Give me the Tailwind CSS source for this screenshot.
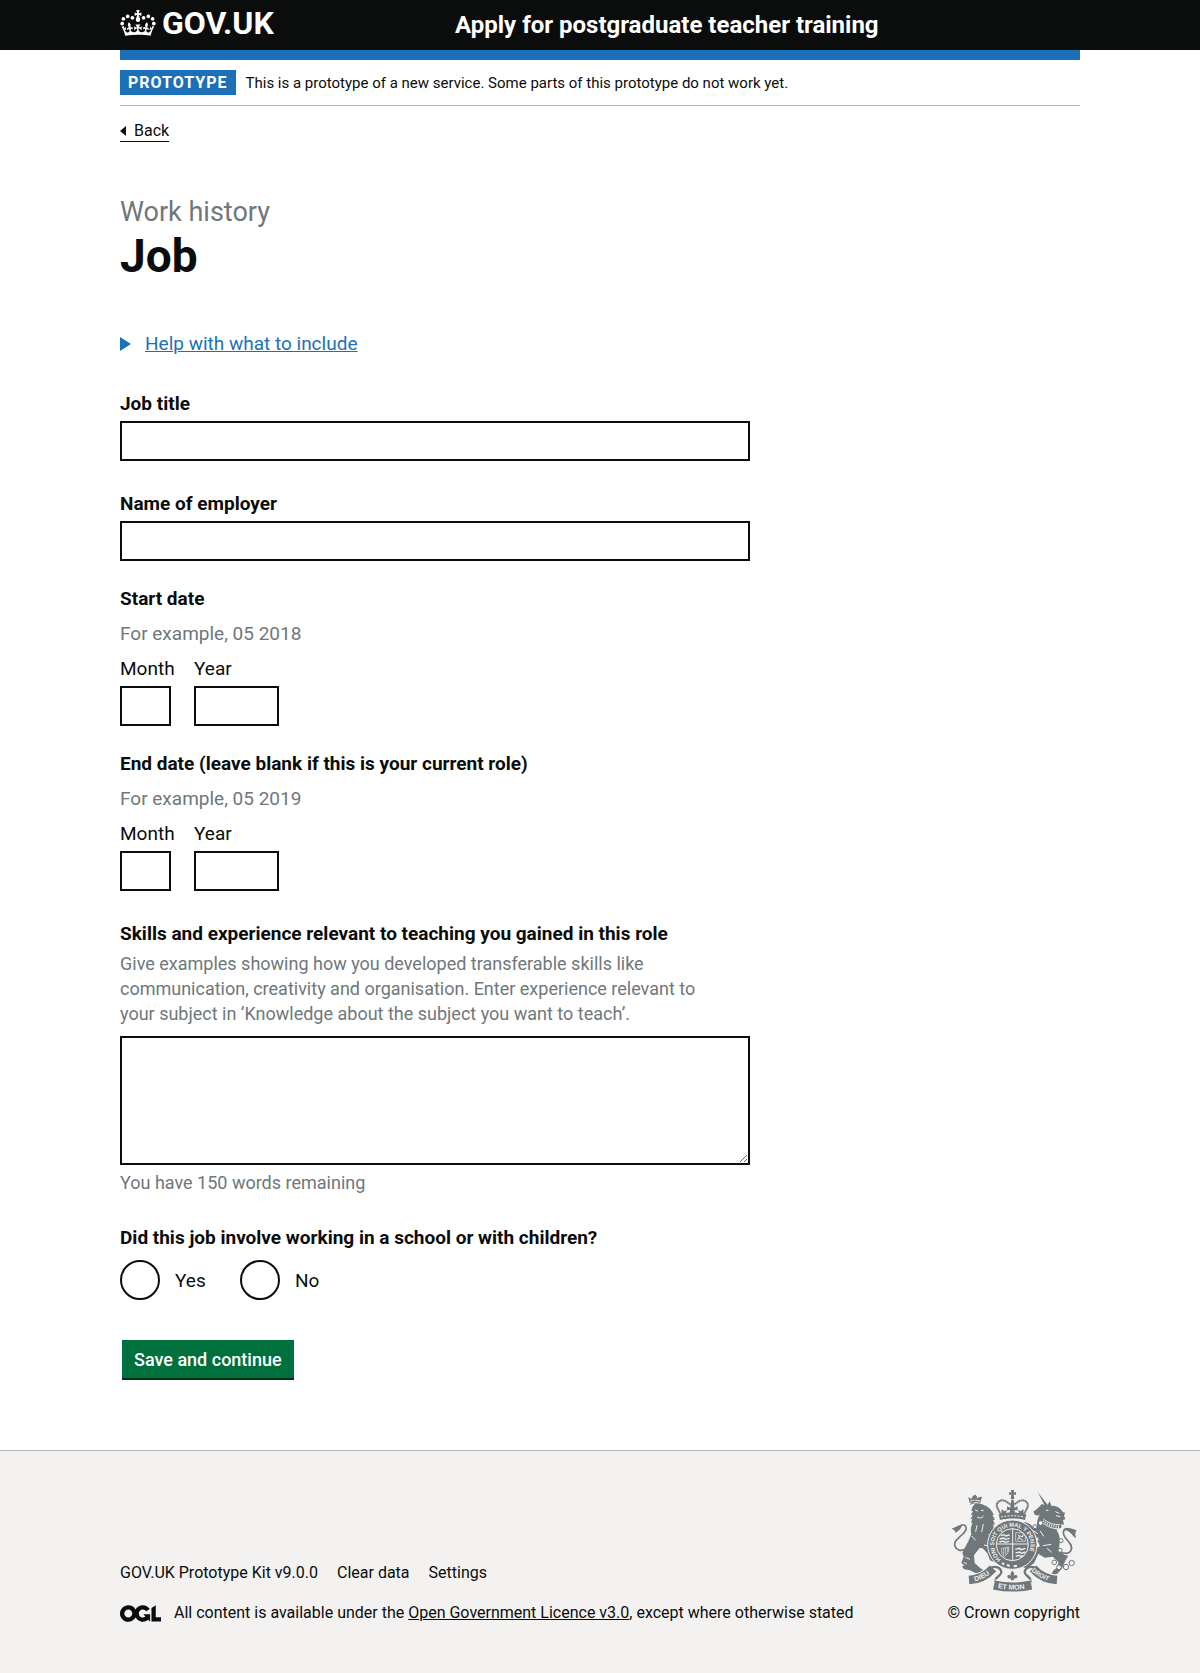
<!DOCTYPE html>
<html lang="en">
<head>
<meta charset="utf-8">
<meta name="viewport" content="width=device-width, initial-scale=1">
<title>Job - Apply for postgraduate teacher training</title>
<script src="https://cdn.jsdelivr.net/npm/@tailwindcss/browser@4"></script>
</head>
<body class="flex min-h-screen flex-col bg-white font-[Roboto,Arial,sans-serif] text-[18px] leading-[25px] text-[#0b0c0c]">

<header class="bg-[#0b0c0c] px-5 text-white">
  <div class="mx-auto flex h-[50px] max-w-[960px] items-center">
    <div class="w-1/3">
      <a href="#" class="inline-flex items-center gap-[6px] text-[32px] leading-[30px] font-bold">
        <svg class="h-[26px] w-9" viewBox="0 0 132 97" fill="currentColor" aria-hidden="true"><path d="M25 30.2c3.5 1.5 7.7-.2 9.1-3.7 1.5-3.6-.2-7.8-3.9-9.2-3.6-1.4-7.6.3-9.1 3.9-1.4 3.5.3 7.5 3.9 9zM9 39.5c3.6 1.5 7.8-.2 9.2-3.7 1.5-3.6-.2-7.8-3.9-9.1-3.6-1.5-7.6.2-9.1 3.8-1.4 3.5.3 7.5 3.8 9zM4.4 57.2c3.5 1.5 7.7-.2 9.1-3.8 1.5-3.6-.2-7.7-3.9-9.1-3.5-1.5-7.6.3-9.1 3.8-1.4 3.5.3 7.6 3.9 9.1zm38.3-21.4c3.5 1.5 7.7-.2 9.1-3.8 1.5-3.6-.2-7.7-3.9-9.1-3.6-1.5-7.6.3-9.1 3.8-1.3 3.6.4 7.7 3.9 9.1zm64.4-5.6c-3.6 1.5-7.8-.2-9.1-3.7-1.5-3.6.2-7.8 3.8-9.2 3.6-1.4 7.7.3 9.2 3.9 1.3 3.5-.4 7.5-3.9 9zm15.9 9.3c-3.6 1.5-7.7-.2-9.1-3.7-1.5-3.6.2-7.8 3.7-9.1 3.6-1.5 7.7.2 9.2 3.8 1.5 3.5-.3 7.5-3.8 9zm4.7 17.7c-3.6 1.5-7.8-.2-9.2-3.8-1.5-3.6.2-7.7 3.9-9.1 3.6-1.5 7.7.3 9.2 3.8 1.3 3.5-.4 7.6-3.9 9.1zM89.3 35.8c-3.6 1.5-7.8-.2-9.2-3.8-1.4-3.6.2-7.7 3.9-9.1 3.6-1.5 7.7.3 9.2 3.8 1.4 3.6-.3 7.7-3.9 9.1zM69.7 17.7l8.9 4.7V9.3l-8.9 2.8c-.2-.3-.5-.6-.9-.9L72.4 0H59.6l3.5 11.2c-.3.3-.6.5-.9.9l-8.8-2.8v13.1l8.8-4.7c.3.3.6.7.9.9l-5 15.4v.1c-.2.8-.4 1.6-.4 2.4 0 4.1 3.1 7.5 7 8.1h.2c.3 0 .7.1 1 .1.4 0 .7 0 1-.1h.2c4-.6 7.1-4.1 7.1-8.1 0-.8-.1-1.7-.4-2.4V34l-5.1-15.4c.4-.2.7-.6 1-.9zM66 92.8c16.9 0 32.8 1.1 47.1 3.2 4-16.9 8.9-26.7 14-33.5l-9.6-3.4c1 4.9 1.1 7.2 0 10.2-1.5-1.4-3-4.3-4.2-8.7L108.6 76c2.8-2 5-3.2 7.5-3.3-4.4 9.4-10 11.9-13.6 11.2-4.3-.8-6.3-4.6-5.6-7.9 1-4.7 5.7-5.9 8-.5 4.3-8.7-3-11.4-7.6-8.8 7.1-7.2 7.9-13.5 2.1-21.1-8 6.1-8.1 12.3-4.5 20.8-4.7-5.4-12.1-2.5-9.5 6.2 3.4-5.2 7.9-2 7.2 3.1-.6 4.3-6.4 7.8-13.5 7.2-10.3-.9-10.9-8-11.2-13.8 2.5-.5 7.1 1.8 11 7.3L80.2 60c-4.1 4.4-8 5.3-12.3 5.4 1.4-4.4 8-11.6 8-11.6H55.5s6.4 7.2 7.9 11.6c-4.2-.1-8-1-12.3-5.4l1.4 16.4c3.9-5.5 8.5-7.7 10.9-7.3-.3 5.8-.9 12.8-11.1 13.8-7.2.6-12.9-2.9-13.5-7.2-.7-5 3.8-8.3 7.1-3.1 2.7-8.7-4.6-11.6-9.4-6.2 3.7-8.5 3.6-14.7-4.6-20.8-5.8 7.6-5 13.9 2.2 21.1-4.7-2.6-11.9.1-7.7 8.8 2.3-5.5 7.1-4.2 8.1.5.7 3.3-1.3 7.1-5.7 7.9-3.5.7-9-1.8-13.5-11.2 2.5.1 4.7 1.3 7.5 3.3l-4.7-15.4c-1.2 4.4-2.7 7.2-4.3 8.7-1.1-3-.9-5.3 0-10.2l-9.5 3.4c5 6.9 9.9 16.7 14 33.5 14.8-2.1 30.8-3.2 47.7-3.2z"/></svg>
        <span>GOV.UK</span>
      </a>
    </div>
    <a href="#" class="pl-[15px] text-[24px] leading-[30px] font-bold">Apply for postgraduate teacher training</a>
  </div>
</header>

<div class="px-5">
  <div class="mx-auto max-w-[960px]">
    <div class="flex items-center gap-[10px] border-t-10 border-b border-t-[#1d70b8] border-b-[#b1b4b6] py-[10px]">
      <strong class="bg-[#1d70b8] px-2 text-[16px] leading-[25px] font-bold tracking-[1px] text-white">PROTOTYPE</strong>
      <span class="text-[15px] leading-5">This is a prototype of a new service. Some parts of this prototype do not work yet.</span>
    </div>
    <a href="#" class="mt-[15px] inline-flex items-center gap-2 border-b border-[#0b0c0c] text-[16px] leading-5">
      <svg class="h-[10px] w-[6px]" viewBox="0 0 6 10" fill="currentColor" aria-hidden="true"><path d="M6 0v10L0 5z"/></svg>Back
    </a>
  </div>
</div>

<main class="px-5 pt-[55px] pb-[70px]">
  <div class="mx-auto max-w-[960px]">
    <form class="max-w-[630px]">
      <h1>
        <span class="block text-[27px] leading-[30px] text-[#6f777b]">Work history</span>
        <span class="mt-1 block text-[46px] leading-[50px] font-bold">Job</span>
      </h1>

      <details class="mt-[50px]">
        <summary class="flex w-fit cursor-pointer list-none items-center gap-[14px] text-[19px] leading-[25px] text-[#1d70b8]">
          <svg class="h-[14px] w-[11px]" viewBox="0 0 11 14" fill="currentColor" aria-hidden="true"><path d="M0 0l11 7-11 7z"/></svg>
          <span class="underline">Help with what to include</span>
        </summary>
      </details>

      <div class="mt-[35px]">
        <label for="job-title" class="block text-[19px] leading-[25px] font-bold">Job title</label>
        <input id="job-title" type="text" class="mt-[5px] block h-10 w-full border-2 border-[#0b0c0c] px-[5px]">
      </div>

      <div class="mt-[30px]">
        <label for="employer" class="block text-[19px] leading-[25px] font-bold">Name of employer</label>
        <input id="employer" type="text" class="mt-[5px] block h-10 w-full border-2 border-[#0b0c0c] px-[5px]">
      </div>

      <fieldset class="mt-[25px] text-[19px] leading-[25px]">
        <legend class="font-bold">Start date</legend>
        <p class="mt-[10px] text-[#6f777b]">For example, 05 2018</p>
        <div class="mt-[10px] flex gap-5">
          <div class="w-[54px]">
            <label for="start-month" class="block">Month</label>
            <input id="start-month" type="text" inputmode="numeric" class="mt-[5px] block h-10 w-[51px] border-2 border-[#0b0c0c] px-[5px]">
          </div>
          <div>
            <label for="start-year" class="block">Year</label>
            <input id="start-year" type="text" inputmode="numeric" class="mt-[5px] block h-10 w-[85px] border-2 border-[#0b0c0c] px-[5px]">
          </div>
        </div>
      </fieldset>

      <fieldset class="mt-[25px] text-[19px] leading-[25px]">
        <legend class="font-bold">End date (leave blank if this is your current role)</legend>
        <p class="mt-[10px] text-[#6f777b]">For example, 05 2019</p>
        <div class="mt-[10px] flex gap-5">
          <div class="w-[54px]">
            <label for="end-month" class="block">Month</label>
            <input id="end-month" type="text" inputmode="numeric" class="mt-[5px] block h-10 w-[51px] border-2 border-[#0b0c0c] px-[5px]">
          </div>
          <div>
            <label for="end-year" class="block">Year</label>
            <input id="end-year" type="text" inputmode="numeric" class="mt-[5px] block h-10 w-[85px] border-2 border-[#0b0c0c] px-[5px]">
          </div>
        </div>
      </fieldset>

      <div class="mt-[30px]">
        <label for="skills" class="block text-[19px] leading-[25px] font-bold">Skills and experience relevant to teaching you gained in this role</label>
        <p class="mt-[5px] pr-[30px] text-[#6f777b]">Give examples showing how you developed transferable skills like communication, creativity and organisation. Enter experience relevant to your subject in ‘Knowledge about the subject you want to teach’.</p>
        <textarea id="skills" class="mt-[10px] block h-[129px] w-full resize-y border-2 border-[#0b0c0c] p-[5px]"></textarea>
        <p class="mt-[5px] text-[#6f777b]">You have 150 words remaining</p>
      </div>

      <fieldset class="mt-[30px] text-[19px] leading-[25px]">
        <legend class="font-bold">Did this job involve working in a school or with children?</legend>
        <div class="mt-[10px] flex">
          <div class="flex w-[120px] items-center gap-[15px]">
            <input id="school-yes" name="school" type="radio" class="size-10 appearance-none rounded-full border-2 border-[#0b0c0c] checked:border-[12px]">
            <label for="school-yes">Yes</label>
          </div>
          <div class="flex items-center gap-[15px]">
            <input id="school-no" name="school" type="radio" class="size-10 appearance-none rounded-full border-2 border-[#0b0c0c] checked:border-[12px]">
            <label for="school-no">No</label>
          </div>
        </div>
      </fieldset>

      <button type="button" class="mt-10 ml-[2px] block h-10 border-b-2 border-[#002d18] bg-[#00703c] px-3 font-medium text-white">Save and continue</button>
    </form>
  </div>
</main>

<footer class="grow border-t border-[#b1b4b6] bg-[#f3f2f1] px-5 pt-[38px] pb-[50px] text-[16px] leading-5">
  <div class="mx-auto flex max-w-[960px] items-end justify-between">
    <div>
      <ul class="flex gap-[19px]">
        <li>GOV.UK Prototype Kit v9.0.0</li>
        <li><a href="#">Clear data</a></li>
        <li><a href="#">Settings</a></li>
      </ul>
      <div class="mt-5 flex items-center gap-[13px]">
        <svg class="h-[17px] w-[41px]" viewBox="0 0 483.2 195.7" fill="currentColor" aria-hidden="true"><path d="M421.5 142.8V.1l-50.7 32.3v161.1h112.4v-50.7zm-122.3-9.6A47.12 47.12 0 0 1 221 97.8c0-26 21.1-47.1 47.1-47.1 16.7 0 31.4 8.7 39.7 21.8l42.7-27.2A97.63 97.63 0 0 0 268.1 0c-36.5 0-68.3 20.1-85.1 49.7A98 98 0 0 0 97.8 0C43.9 0 0 43.9 0 97.8s43.9 97.8 97.8 97.8c36.5 0 68.3-20.1 85.1-49.7a97.76 97.76 0 0 0 149.6 25.4l19.4 22.2h3v-87.8h-80l24.3 27.5zM97.8 145c-26 0-47.1-21.1-47.1-47.1s21.1-47.1 47.1-47.1 47.1 21.1 47.1 47.1S123.8 145 97.8 145"/></svg>
        <p>All content is available under the <a href="#" class="underline">Open Government Licence v3.0</a>, except where otherwise stated</p>
      </div>
    </div>
    <a href="#" class="flex flex-col items-end">
      <svg class="mb-[10px] h-[104px] w-[131px]" viewBox="28 30 393 312" fill="#6f777b" aria-hidden="true">
        <!-- central crown -->
        <g>
          <path d="M214 33h9l-1 8 7-2v9l-7-2 2 14h-11l2-14-7 2v-9l7 2z"/>
          <path d="M184 108l-12-24c-4-16 14-26 28-16l18 12 18-12c14-10 32 0 28 16l-12 24" fill="none" stroke="#6f777b" stroke-width="6" stroke-dasharray="6 1"/>
          <path d="M215 62h7l2 24 10-4v12l-9-1 1 12h-16l1-12-9 1V82l10 4zM186 90l8 7 8-4-5 14-12 2zM251 90l-8 7-8-4 5 14 12 2z"/>
          <path d="M177 106c26-7 57-7 83 0l-4 17c-24-6-51-6-75 0z"/>
          <path d="M184 114c22-5 48-5 70 0" fill="none" stroke="#f3f2f1" stroke-width="3" stroke-dasharray="6 4"/>
        </g>
        <!-- lion -->
        <g>
          <path d="M90 72l-4-18 9 6 3-7 7-6 2 0 6 6-2 6 7-5 9-1-5 19c-11-4-22-4-32 0z"/>
          <path d="M92 66c10-3 20-3 30 0" fill="none" stroke="#f3f2f1" stroke-width="3"/>
          <path d="M90 78c14-7 30-7 42 0 15 5 25 16 31 30l-5-1 8 16-6-1 6 15-6-1c3 8 2 15-2 22 14 0 24 6 28 14l-9-2 3 9-10-5-9 4-14-14 3 25 11 17c2 13 9 22 21 23l7 6-6 12-18 3-14-6-8-21-14-15-9-1-17 22 2 23 17 16 13 7-2 9-20 1-22-11-18-3-6-9 7-2-9-9 7-18-4-12 18-34 9-22c-3-12-2-22 4-34l-5 1 4-13-6 2 8-14-7 2 7-12-5-2c2-9 5-16 11-21l-8-2 9-3-3-7z"/>
          <path d="M76 211c-12 6-26 3-30-9-5-15 9-23 20-34 11-10 18-19 11-27-6-6-16-2-20 4" fill="none" stroke="#6f777b" stroke-width="5"/>
          <path d="M66 140c-2 12-12 16-20 22 3-7-4-10-10-13 8-1 15-11 30-9z"/>
          <path d="M106 92l9 5m9-2l8-1M112 114c8 5 16 3 20-4M112 139l-4 19m23-23l-5 24m-30 12l12 13m50-10l8 4M72 250l10 5m-5-20l14 6m42-43l14 3" fill="none" stroke="#f3f2f1" stroke-width="3"/>
        </g>
        <!-- unicorn -->
        <g>
          <path d="M294 39l32 41-8 5z"/>
          <path d="M322 80l8-13 5 13c17-1 30 9 35 20l7 1-4 8 4 12-7 2 3 14-8-1v10l-15 6c8 11 12 25 10 40l-2 15c4 9 9 16 17 21l11 2-9 15-11 25-15 16h-15l4-11 12-9 5-16-18-17-24 3-19-12-12 27-15 12-16 4-5-9 13-8 13-19 10-21 17-9c-4-8-7-15-7-25l-10-8-12 7-11-4 10-6-13-10-13-3-3-13 14-10 13 5 12 11 11-4c-1-15 3-26 10-36l-6 5-11-3-4-9c9-6 18-13 25-23z"/>
          <path d="M312 120c14 13 32 18 49 17M308 130c15 14 33 20 51 19" fill="none" stroke="#f3f2f1" stroke-width="3"/>
          <path d="M310 126c15 12 33 18 49 17" fill="none" stroke="#f3f2f1" stroke-width="6" stroke-dasharray="3 4"/>
          <path d="M319 94h7m21 4l12 5m-10 7l13 3M301 155l11 17m-18-8l-13-9m29 45l25-4m-13 12l14 12" fill="none" stroke="#f3f2f1" stroke-width="3"/>
          <path d="M358 214c12 12 30 12 36 0 7-15-8-26-17-38-8-11-9-24 4-28" fill="none" stroke="#6f777b" stroke-width="5"/>
          <path d="M372 152c10-10 25-3 39 2-4 4-6 13-2 23-11-4-12-20-37-25z"/>
          <g fill="#f3f2f1" stroke="#6f777b" stroke-width="3">
            <circle cx="303" cy="132" r="7"/><circle cx="286" cy="143" r="6"/><circle cx="291" cy="181" r="7"/><circle cx="364" cy="185" r="6"/><circle cx="361" cy="214" r="6"/><circle cx="344" cy="250" r="7"/><circle cx="358" cy="265" r="7"/><circle cx="379" cy="264" r="8"/><circle cx="396" cy="252" r="8"/>
          </g>
        </g>
        <!-- garter and shield -->
        <circle cx="218" cy="197" r="74" stroke="#f3f2f1" stroke-width="3"/>
        <circle cx="218" cy="197" r="48" fill="none" stroke="#f3f2f1" stroke-width="3"/>
        <path id="garter" d="M184 241a55 55 0 1 1 68 0" fill="none"/>
        <text font-family="Liberation Sans, Arial, sans-serif" font-weight="700" font-size="17" fill="#f3f2f1"><textPath href="#garter">HONI SOIT QUI MAL Y PENSE</textPath></text>
        <path d="M219 149v95M171 195h95" stroke="#f3f2f1" stroke-width="3"/>
        <g fill="none" stroke="#f3f2f1" stroke-width="4">
          <path d="M183 170l10-3 5 4 12-3M180 180l12-3 5 4 13-3M179 189l12-3 5 4 13-3"/>
          <path d="M228 232l10-3 5 4 8-4M228 222l12-3 5 4 12-4M227 211l12-3 6 4 12-4"/>
          <path d="M228 161h20l9 10v16h-29z" stroke-width="2"/>
          <path d="M234 183l6-13 8 4 3-8m-13 10l12 8m-15-17l4 5" stroke-width="3"/>
          <path d="M186 208c10 0 14-4 22-3 0 12-5 22-15 28-6-8-9-16-7-25m6 1v18m6-20v19m6-20v12" stroke-width="2"/>
          <path d="M202 258l8 3m12 1l10-2m-45-8l7 4" stroke-width="6"/>
        </g>
        <!-- motto ribbon -->
        <g fill="none">
          <path d="M154 266c14-6 28 0 31 12 1 10-9 11-16 21l-2 12M286 266c-14-6-28 0-31 12-1 10 9 11 16 21l2 12" stroke="#6f777b" stroke-width="7"/>
          <path d="M90 303c28-3 50-12 69-34M350 303c-28-3-50-12-69-34" stroke="#f3f2f1" stroke-width="32"/>
          <path d="M88 303c28-2 52-12 72-35M352 303c-28-2-52-12-72-35" stroke="#6f777b" stroke-width="26"/>
          <path d="M163 317c36 8 76 8 112 0" stroke="#f3f2f1" stroke-width="32"/>
          <path d="M163 318c36 8 76 8 112 0" stroke="#6f777b" stroke-width="27"/>
        </g>
        <path id="ribbon-left" d="M106 307q32-8 58-34" fill="none"/>
        <path id="ribbon-mid" d="M174 327q45 10 95 0" fill="none"/>
        <path id="ribbon-right" d="M275 276q26 25 70 35" fill="none"/>
        <g font-family="Liberation Sans, Arial, sans-serif" font-weight="700" font-size="21" fill="#f3f2f1">
          <text><textPath href="#ribbon-left">DIEU</textPath></text>
          <text><textPath href="#ribbon-mid">ET MON</textPath></text>
          <text font-size="19"><textPath href="#ribbon-right">DROIT</textPath></text>
        </g>
        <path d="M218 275c7 6 7 12 3 18 3-7 13-7 12 0-1 5-6 7-11 5l1 6h-10l1-6c-5 2-10 0-11-5-1-7 9-7 12 0-4-6-4-12 3-18z"/>
      </svg>
      <span>© Crown copyright</span>
    </a>
  </div>
</footer>
</body>
</html>
